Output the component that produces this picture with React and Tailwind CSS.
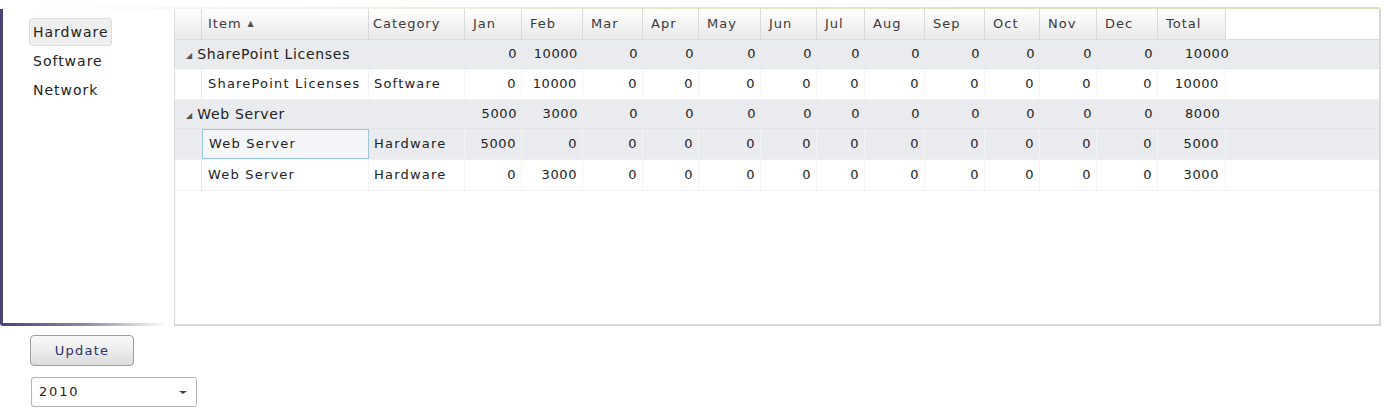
import React from 'react';

const months = ['Jan', 'Feb', 'Mar', 'Apr', 'May', 'Jun', 'Jul', 'Aug', 'Sep', 'Oct', 'Nov', 'Dec'];

// widths of the month columns, left to right
const monthW = [
  'w-[57px]', 'w-[61px]', 'w-[60px]', 'w-[56px]', 'w-[62px]', 'w-[56px]',
  'w-[48px]', 'w-[60px]', 'w-[60px]', 'w-[55px]', 'w-[57px]', 'w-[61px]',
];

const rows = [
  { group: true, item: 'SharePoint Licenses', values: [0, 10000, 0, 0, 0, 0, 0, 0, 0, 0, 0, 0], total: 10000 },
  { item: 'SharePoint Licenses', category: 'Software', values: [0, 10000, 0, 0, 0, 0, 0, 0, 0, 0, 0, 0], total: 10000 },
  { group: true, item: 'Web Server', values: [5000, 3000, 0, 0, 0, 0, 0, 0, 0, 0, 0, 0], total: 8000 },
  { item: 'Web Server', category: 'Hardware', values: [5000, 0, 0, 0, 0, 0, 0, 0, 0, 0, 0, 0], total: 5000, selected: true },
  { item: 'Web Server', category: 'Hardware', values: [0, 3000, 0, 0, 0, 0, 0, 0, 0, 0, 0, 0], total: 3000 },
];

const font = { fontFamily: '"DejaVu Sans", Verdana, sans-serif' };

const HeaderCell = ({ w, children, pad = 'pl-2' }) => (
  <div className={`${w} h-full flex items-center ${pad} text-[13px] text-[#3a3a3a] tracking-[1px] border-r border-[#dadada]`}>
    {children}
  </div>
);

const GridRow = ({ row }) => {
  if (row.group) {
    return (
      <div className="flex h-[29px] bg-[#e9ebee] text-[14px] text-[#222] border-b border-[#e2e4e7]">
        <div className="w-[290px] flex items-center pl-[11px]">
          <span className="text-[8px] text-[#555] mr-[5px] mt-[3px]">◢</span>
          <span className="tracking-[0.7px]">{row.item}</span>
        </div>
        {row.values.map((v, i) => (
          <div key={i} className={`${monthW[i]} flex items-center justify-end pr-[5px] text-[13px] tracking-[0.6px]`}>
            {v}
          </div>
        ))}
        <div className="w-[68px] flex items-center pl-[27px] text-[13px] tracking-[0.6px]">{row.total}</div>
      </div>
    );
  }
  return (
    <div className={`flex h-[31px] text-[13px] text-[#222] border-b border-[#eef0f2] ${row.selected ? 'bg-[#e9ebee]' : 'bg-white'}`}>
      <div className="w-[27px] border-r border-[#e8e8e8]" />
      <div className={`w-[167px] flex items-center pl-[6px] tracking-[1.2px] ${row.selected ? 'border border-[#9cc9d9] bg-[#f3f5f7]' : 'border-r border-[#f3f3f3]'}`}>
        {row.item}
      </div>
      <div className="w-[96px] flex items-center pl-[5px] tracking-[1.2px] border-r border-[#f3f3f3]">{row.category}</div>
      {row.values.map((v, i) => (
        <div key={i} className={`${monthW[i]} flex items-center justify-end pr-[5px] tracking-[0.6px] border-r border-[#f3f3f3]`}>
          {v}
        </div>
      ))}
      <div className="w-[68px] flex items-center justify-end pr-[6px] tracking-[0.6px] border-r border-[#f3f3f3]">{row.total}</div>
    </div>
  );
};

export default function App() {
  return (
    <div className="w-[1384px] h-[416px] bg-white overflow-hidden" style={font}>
      <div className="pt-[7px]">
        <div className="h-[2px] w-[1380px] bg-gradient-to-r from-white via-[#e8e3c4] to-[#e2dcb2]" />
      </div>

      <div className="flex h-[317px] gap-[8px]">
        {/* left list panel */}
        <div className="relative w-[166px] h-full border-l-[3px] border-[#4b4673] rounded-bl-[3px]">
          <div className="flex flex-col pl-[26px] pt-[9px] text-[14px] text-[#222] tracking-[1px]">
            <div className="w-[83px] h-[28px] flex items-center pl-[3px] bg-[#efefef] border border-[#dcdcdc] rounded-[3px]">
              Hardware
            </div>
            <div className="h-[30px] flex items-center pl-[4px]">Software</div>
            <div className="h-[28px] flex items-center pl-[4px]">Network</div>
          </div>
          <div className="absolute left-0 bottom-0 h-[3px] w-[163px] bg-gradient-to-r from-[#4b4673] via-[#8d89a6] to-transparent" />
        </div>

        {/* data grid */}
        <div className="w-[1207px] h-full border-l border-r-2 border-b-2 border-[#d8d8d8]">
          <div className="flex h-[31px] bg-gradient-to-b from-white to-[#e9e9e9] border-b border-[#dcdcdc]">
            <HeaderCell w="w-[27px]" />
            <HeaderCell w="w-[167px]" pad="pl-[6px]">
              <span>Item</span>
              <span className="ml-[6px] text-[8px] text-[#555]">▲</span>
            </HeaderCell>
            <HeaderCell w="w-[96px]" pad="pl-[4px]">Category</HeaderCell>
            {months.map((m, i) => (
              <HeaderCell key={m} w={monthW[i]}>{m}</HeaderCell>
            ))}
            <HeaderCell w="w-[68px]">Total</HeaderCell>
            <div className="flex-1 bg-white h-full" />
          </div>
          {rows.map((r, i) => (
            <GridRow key={i} row={r} />
          ))}
        </div>
      </div>

      {/* bottom controls */}
      <div className="flex flex-col pl-[30px] pt-[9px] gap-[11px]">
        <button className="w-[104px] h-[31px] rounded-[4px] border border-[#9d9d9d] bg-gradient-to-b from-[#f8f8f8] via-[#ededed] to-[#dadada] text-[13px] text-[#28336b] tracking-[1.2px]">
          Update
        </button>
        <div className="ml-[1px] w-[166px] h-[30px] rounded-[3px] border border-[#b4b4b4] bg-white flex items-center justify-between pl-[7px] pr-[9px] text-[13px] text-[#1e1e1e] tracking-[1.8px]">
          <span>2010</span>
          <span className="w-0 h-0 border-l-[4px] border-r-[4px] border-t-[3px] border-l-transparent border-r-transparent border-t-[#444]" />
        </div>
      </div>
    </div>
  );
}
